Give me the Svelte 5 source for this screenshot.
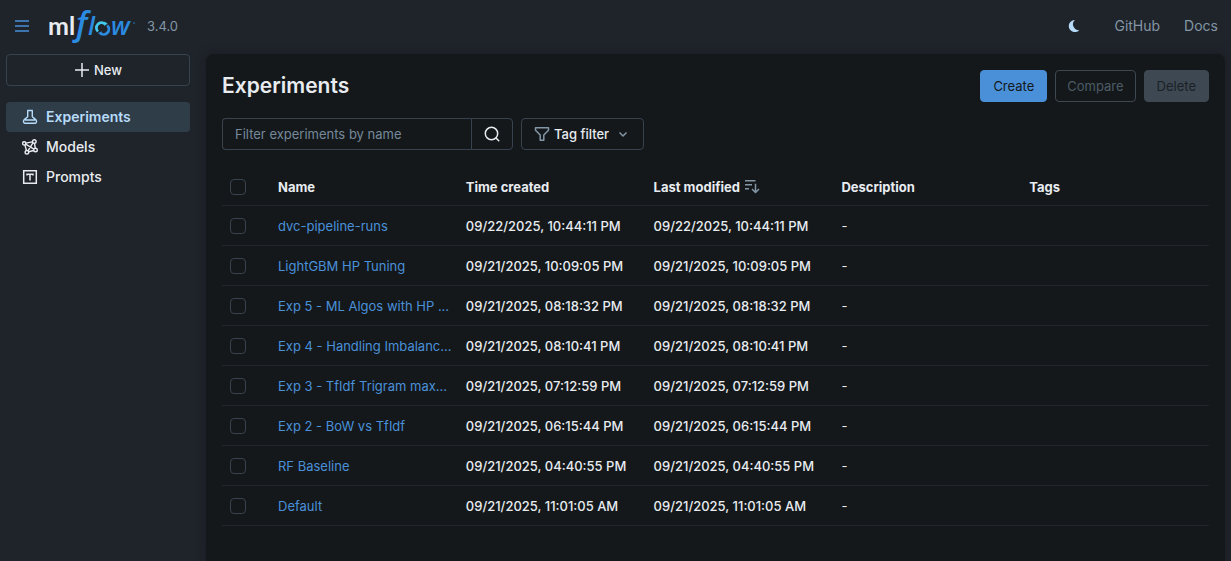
<script>
  const experiments = [
    { name: 'dvc-pipeline-runs', time: '09/22/2025, 10:44:11 PM' },
    { name: 'LightGBM HP Tuning', time: '09/21/2025, 10:09:05 PM' },
    { name: 'Exp 5 - ML Algos with HP ...', time: '09/21/2025, 08:18:32 PM' },
    { name: 'Exp 4 - Handling Imbalanc...', time: '09/21/2025, 08:10:41 PM' },
    { name: 'Exp 3 - TfIdf Trigram max...', time: '09/21/2025, 07:12:59 PM' },
    { name: 'Exp 2 - BoW vs TfIdf', time: '09/21/2025, 06:15:44 PM' },
    { name: 'RF Baseline', time: '09/21/2025, 04:40:55 PM' },
    { name: 'Default', time: '09/21/2025, 11:01:05 AM' }
  ];
</script>

<div class="app">
  <header>
    <button class="plain menu" aria-label="Toggle sidebar">
      <svg width="16" height="16" viewBox="0 0 16 16" stroke="#4a90d9" stroke-width="1.4"><path d="M1 3h14M1 8h14M1 13h14" /></svg>
    </button>
    <a class="logo" href="#home" aria-label="MLflow home">
      <svg width="88" height="44" viewBox="0 0 88 44">
        <text class="ml" x="0" y="31">ml</text>
        <text class="f" x="28" y="31">f</text>
        <text class="lw" x="40" y="31">l</text>
        <g fill="none" stroke-width="2.8">
          <path stroke="#43c9ed" d="M50 27.600A5 5 0 0 1 57 20.100" />
          <path stroke="#2b8be0" d="M59.200 21.500A5 5 0 0 1 52.300 29" />
        </g>
        <path fill="#43c9ed" d="M56.500 17.500l3.200 2.300-3.700 2.200z" />
        <path fill="#2b8be0" d="M53.300 31.600l-3.300-2.600 3.800-1.800z" />
        <text class="lw" x="63" y="31">w</text>
        <circle cx="86" cy="19" r="1" fill="#245c92" />
      </svg>
    </a>
    <span class="version">3.4.0</span>
    <nav class="links" aria-label="Resources">
      <button class="plain moon" aria-label="Toggle dark mode">
        <svg width="16" height="16" viewBox="0 0 16 16"><path fill="#b7dcfa" d="M8.800 1.900A6.100 6.100 0 1 0 13.300 12.200A6 6 0 0 1 8.800 1.900Z" /></svg>
      </button>
      <a href="#github">GitHub</a>
      <a href="#docs">Docs</a>
    </nav>
  </header>

  <div class="body">
    <aside>
      <button class="btn new">
        <svg width="16" height="16" viewBox="0 0 16 16" stroke="currentColor" stroke-width="1.500"><path d="M8 1v14M1 8h14" /></svg>
        New
      </button>
      <nav class="side" aria-label="Main">
        <a class="active" href="#experiments">
          <svg width="16" height="16" viewBox="0 0 16 16" fill="none" stroke="currentColor" stroke-width="1.400" stroke-linejoin="round"><path d="M5.200 1.500h5.600M5.700 1.500v6.300L2 10.900c-1 .9-.6 3.400.9 3.400h10.200c1.500 0 1.900-2.500.9-3.400l-3.700-3.100V1.500M3 11h10" /></svg>
          Experiments
        </a>
        <a href="#models">
          <svg width="16" height="16" viewBox="0 0 16 16" fill="none" stroke="currentColor" stroke-width="1.400"><circle cx="2.200" cy="4.400" r="1.600" /><circle cx="12.300" cy="2.500" r="1.800" /><circle cx="4.900" cy="13.300" r="1.800" /><circle cx="13.500" cy="11" r="1.800" /><path d="M3.800 4.100l6.700-1.200M2.900 5.900l1.500 5.600M3.600 5.200l8.300 4.900M12.500 4.300l.8 4.900M10.900 3.800L6 11.800M6.700 12.800l5-1.300" /></svg>
          Models
        </a>
        <a href="#prompts">
          <svg width="16" height="16" viewBox="0 0 16 16" fill="none" stroke="currentColor" stroke-width="1.500"><path d="M1.700 1.700h12.600v12.600H1.700zM5 6.500V5.200h6v1.300M8 5v6.500" /></svg>
          Prompts
        </a>
      </nav>
    </aside>

    <main>
      <div class="title">
        <h1>Experiments</h1>
        <button class="btn primary">Create</button>
        <button class="btn compare" disabled>Compare</button>
        <button class="btn delete" disabled>Delete</button>
      </div>

      <div class="filters">
        <div class="search">
          <input type="text" aria-label="Filter experiments by name" placeholder="Filter experiments by name" />
          <button class="btn find" aria-label="Search">
            <svg width="16" height="16" viewBox="0 0 16 16" fill="none" stroke="currentColor" stroke-width="1.500"><circle cx="7.500" cy="7.500" r="6.200" /><path d="M11.800 11.800l3.400 3.400" /></svg>
          </button>
        </div>
        <button class="btn tag">
          <svg width="16" height="16" viewBox="0 0 16 16" fill="none" stroke="#8396a5" stroke-width="1.500" stroke-linejoin="round"><path d="M1.500 1.700h13v2.500L9.800 9v5.300H6.200V9L1.500 4.200z" /></svg>
          Tag filter
          <svg class="chevron" width="16" height="16" viewBox="0 0 16 16" fill="none" stroke="#8396a5" stroke-width="1.500"><path d="M4.500 6.500L8 10l3.500-3.500" /></svg>
        </button>
      </div>

      <table>
        <thead>
          <tr>
            <th class="check"><input type="checkbox" aria-label="Select all experiments" /></th>
            <th>Name</th>
            <th>Time created</th>
            <th>
              <span class="sort">
                Last modified
                <svg width="16" height="16" viewBox="0 0 16 16" fill="none" stroke="#8396a5" stroke-width="1.500"><path d="M1 1.800h10.500M1 5.800h7M1 9.800h4M11.500 4.800v8.500M8 10l3.500 3.500 3.500-3.500" /></svg>
              </span>
            </th>
            <th>Description</th>
            <th>Tags</th>
          </tr>
        </thead>
        <tbody>
          {#each experiments as exp}
            <tr>
              <td class="check"><input type="checkbox" aria-label={`Select ${exp.name}`} /></td>
              <td><a href="#experiment">{exp.name}</a></td>
              <td class="time">{exp.time}</td>
              <td class="time">{exp.time}</td>
              <td>-</td>
              <td></td>
            </tr>
          {/each}
        </tbody>
      </table>
    </main>
  </div>
</div>

<style>
  :global(body) {
    margin: 0;
    background: #1f232a;
  }
  .app {
    box-sizing: border-box;
    min-height: 100vh;
    display: flex;
    flex-direction: column;
    background: #1f232a;
    color: #e8ecf0;
    font: 13px/20px Inter, "Liberation Sans", sans-serif;
  }
  svg {
    display: block;
    flex: none;
  }
  button,
  input {
    font: inherit;
    color: inherit;
    margin: 0;
  }
  a {
    color: inherit;
    text-decoration: none;
  }
  header {
    display: flex;
    align-items: center;
    height: 52px;
    padding: 0 13px 0 14px;
    color: #8396a5;
  }
  .plain {
    border: 0;
    padding: 0;
    background: none;
  }
  .logo {
    margin-left: 18px;
  }
  .logo svg {
    overflow: visible;
  }
  .ml {
    font: 700 25px Lato, sans-serif;
    fill: #e8ecf0;
  }
  .lw {
    font: italic 600 25px "Open Sans", sans-serif;
    fill: #2b8be0;
  }
  .f {
    font: italic 600 33px "Open Sans", sans-serif;
    fill: #2b8be0;
  }
  .version {
    margin-left: 11px;
  }
  .links {
    display: flex;
    align-items: center;
    gap: 24px;
    margin-left: auto;
    font-size: 14px;
  }
  .moon {
    margin-right: 8px;
  }
  .body {
    flex: 1;
    display: flex;
  }
  aside {
    flex: none;
    width: 184px;
    padding: 2px 16px 0 6px;
  }
  .btn {
    display: flex;
    align-items: center;
    justify-content: center;
    box-sizing: border-box;
    height: 32px;
    padding: 0 12px;
    border: 1px solid #37444f;
    border-radius: 4px;
    background: none;
  }
  .new {
    width: 100%;
    gap: 4px;
    font-weight: 500;
  }
  .side {
    display: flex;
    flex-direction: column;
    margin-top: 16px;
  }
  .side a {
    display: flex;
    align-items: center;
    gap: 8px;
    height: 30px;
    padding: 0 16px;
    border-radius: 4px;
    font-size: 14px;
    font-weight: 500;
  }
  .side .active {
    background: #2f3d49;
    color: #b7dcfa;
    font-weight: 600;
  }
  main {
    flex: 1;
    min-width: 0;
    margin: 2px 6px 0 0;
    padding: 16px;
    border-radius: 8px 8px 0 0;
    background: #14181b;
    box-shadow: 0 0 8px #14181b88;
  }
  .title {
    display: flex;
    align-items: center;
    gap: 8px;
  }
  h1 {
    flex: 1;
    margin: 0;
    font-size: 21px;
    line-height: 28px;
    font-weight: 600;
  }
  .primary {
    border-color: #4a90d9;
    background: #4a90d9;
    color: #14181b;
  }
  .compare {
    padding: 0 11px;
    color: #4d5b67;
    border-color: #3d4852;
  }
  .delete {
    border-color: #3d4852;
    background: #3d4852;
    color: #1b2126;
  }
  .filters {
    display: flex;
    gap: 8px;
    margin-top: 16px;
  }
  .search {
    display: flex;
  }
  .search input {
    box-sizing: border-box;
    width: 249px;
    height: 32px;
    padding: 0 12px;
    border: 1px solid #37444f;
    border-right: 0;
    border-radius: 4px 0 0 4px;
    background: none;
  }
  .search input::placeholder {
    color: #76899a;
    opacity: 1;
  }
  .find {
    border-radius: 0 4px 4px 0;
  }
  .tag {
    gap: 4px;
    font-weight: 500;
  }
  .chevron {
    margin-left: 2px;
  }
  table {
    width: 100%;
    margin-top: 20px;
    table-layout: fixed;
    border-collapse: separate;
    border-spacing: 0;
  }
  th,
  td {
    box-sizing: border-box;
    height: 40px;
    padding: 0 4px 0 8px;
    border-bottom: 1px solid #20262b;
    text-align: left;
    overflow: hidden;
    white-space: nowrap;
    text-overflow: ellipsis;
  }
  th {
    height: 36px;
    padding-bottom: 2px;
    font-weight: 700;
  }
  td a {
    color: #4a90d9;
  }
  .time {
    font-weight: 500;
  }
  .check {
    width: 48px;
    text-overflow: clip;
  }
  .check input {
    display: block;
    appearance: none;
    box-sizing: border-box;
    width: 16px;
    height: 16px;
    border: 1px solid #37444f;
    border-radius: 4px;
  }
  .sort {
    display: flex;
    align-items: center;
    gap: 4px;
  }
</style>
